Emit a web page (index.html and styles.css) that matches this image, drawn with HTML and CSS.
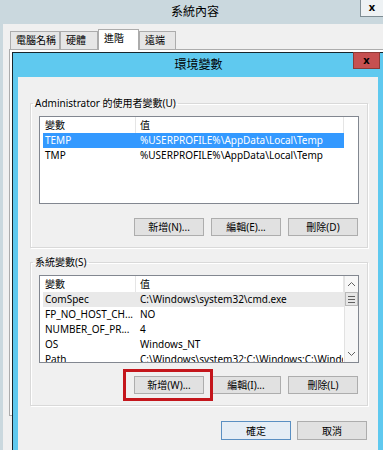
FILE: index.html
```html
<!DOCTYPE html>
<html lang="zh-Hant">
<head>
    <meta charset="UTF-8">
    <meta name="viewport" content="width=device-width, initial-scale=1.0">
    <title>系統內容 - 環境變數</title>
    <link rel="stylesheet" href="styles.css">
</head>
<body>
    <div class="window">
        <div class="titlebar">
            <span class="title">系統內容</span>
            <span class="win-close">x</span>
        </div>
        <div class="win-body">
            <div class="tabs">
                <div class="tab tab-name">電腦名稱</div>
                <div class="tab tab-hw">硬體</div>
                <div class="tab tab-adv active">進階</div>
                <div class="tab tab-remote">遠端</div>
            </div>
            <div class="tab-panel"></div>
        </div>

        <div class="dialog">
            <div class="dlg-title">
                <span class="title">環境變數</span>
                <span class="dlg-close">x</span>
            </div>
            <div class="dlg-body">
                <fieldset class="group">
                    <legend>Administrator 的使用者變數(U)</legend>
                    <div class="list">
                        <div class="rows">
                            <div class="row head"><span class="c1">變數</span><span class="c2">值</span></div>
                            <div class="row selected"><span class="c1">TEMP</span><span class="c2">%USERPROFILE%\AppData\Local\Temp</span></div>
                            <div class="row"><span class="c1">TMP</span><span class="c2">%USERPROFILE%\AppData\Local\Temp</span></div>
                        </div>
                    </div>
                    <div class="btn-row">
                        <button class="btn">新增(N)...</button>
                        <button class="btn">編輯(E)...</button>
                        <button class="btn">刪除(D)</button>
                    </div>
                </fieldset>

                <fieldset class="group group-sys">
                    <legend>系統變數(S)</legend>
                    <div class="list">
                        <div class="rows">
                            <div class="row head"><span class="c1">變數</span><span class="c2">值</span></div>
                            <div class="row hover"><span class="c1">ComSpec</span><span class="c2">C:\Windows\system32\cmd.exe</span></div>
                            <div class="row"><span class="c1">FP_NO_HOST_CH...</span><span class="c2">NO</span></div>
                            <div class="row"><span class="c1">NUMBER_OF_PR...</span><span class="c2">4</span></div>
                            <div class="row"><span class="c1">OS</span><span class="c2">Windows_NT</span></div>
                            <div class="row"><span class="c1">Path</span><span class="c2">C:\Windows\system32;C:\Windows;C:\Windows\System32\Wbem</span></div>
                        </div>
                        <div class="scrollbar">
                            <div class="arrow">
                                <svg width="9" height="6" viewBox="0 0 9 6"><polyline points="1,5 4.5,1.5 8,5"/></svg>
                            </div>
                            <div class="thumb"><i></i><i></i><i></i></div>
                            <div class="arrow arrow-down">
                                <svg width="9" height="6" viewBox="0 0 9 6"><polyline points="1,1 4.5,4.5 8,1"/></svg>
                            </div>
                        </div>
                    </div>
                    <div class="btn-row">
                        <button class="btn marked">新增(W)...</button>
                        <button class="btn">編輯(I)...</button>
                        <button class="btn">刪除(L)</button>
                    </div>
                </fieldset>

                <div class="btn-row dlg-buttons">
                    <button class="btn default">確定</button>
                    <button class="btn">取消</button>
                </div>
            </div>
        </div>
    </div>
</body>
</html>
```
FILE: styles.css
```css
html, body {
    margin: 0;
    width: 383px;
    height: 450px;
    overflow: hidden;
}

body {
    font-family: "Noto Sans", "Noto Sans CJK TC", sans-serif;
    font-size: 10px;
    color: #000;
    background-color: #cad8de;
}

.window {
    position: relative;
    height: 450px;
    background-color: #cad8de;
}

/* outer window */
.titlebar {
    display: flex;
    height: 24px;
}

.titlebar .title {
    flex: 1;
    padding-left: 30px;
    text-align: center;
    font-size: 12px;
    line-height: 24px;
}

.win-close {
    width: 22px;
    height: 16px;
    background-color: #eef2f4;
    border-left: 1px solid #7e8d94;
    border-bottom: 1px solid #7e8d94;
    text-align: center;
    font-weight: bold;
    font-size: 11px;
    line-height: 14px;
}

.win-body {
    margin-left: 3px;
    height: 426px;
    padding-top: 5px;
    box-sizing: border-box;
    background-color: #f0f0f0;
}

.tabs {
    display: flex;
    align-items: flex-end;
    height: 20px;
    padding-left: 7px;
    position: relative;
    z-index: 1;
}

.tab {
    box-sizing: border-box;
    height: 18px;
    padding-left: 5px;
    border: 1px solid #acacac;
    border-bottom: none;
    background-color: #e6e6e6;
    line-height: 17px;
}

.tab-name { width: 50px; }
.tab-hw { width: 38px; }
.tab-adv { width: 41px; }
.tab-remote { width: 37px; }

.tab.active {
    height: 21px;
    margin-bottom: -1px;
    background-color: #fff;
    line-height: 16px;
}

.tab-panel {
    margin-left: 6px;
    height: 365px;
    border: 1px solid #acacac;
    border-right: none;
    background-color: #fff;
}

/* environment variables dialog */
.dialog {
    position: absolute;
    left: 12px;
    top: 52px;
    width: 371px;
    height: 398px;
    border-left: 1px solid #17252c;
    border-top: 1px solid #17252c;
    background-color: #5fc9ef;
}

.dlg-title {
    display: flex;
    height: 24px;
}

.dlg-title .title {
    flex: 1;
    padding-left: 31px;
    text-align: center;
    font-size: 12px;
    line-height: 24px;
}

.dlg-close {
    box-sizing: border-box;
    width: 27px;
    height: 17px;
    margin-top: -1px;
    margin-right: 4px;
    background-color: #c75050;
    border: 1px solid #8d3a36;
    text-align: center;
    font-weight: bold;
    font-size: 11px;
    line-height: 13px;
}

.dlg-body {
    box-sizing: border-box;
    width: 360px;
    height: 374px;
    margin: 0 5px;
    padding-top: 19px;
    background-color: #f0f0f0;
}

.group {
    box-sizing: border-box;
    width: 338px;
    min-width: 0;
    margin: 0 0 0 12px;
    padding: 0 8px 11px;
    border: 1px solid #d9d9d9;
    box-shadow: inset 1px 1px 0 #fff, 1px 1px 0 #fff;
}

.group legend {
    margin-left: -6px;
    padding: 0 2px;
    line-height: 14px;
}

.group-sys {
    margin-top: 7px;
}

.list {
    display: flex;
    box-sizing: border-box;
    height: 88px;
    margin-top: 6px;
    padding-left: 3px;
    border: 1px solid #828790;
    background-color: #fff;
    overflow: hidden;
}

.rows {
    width: 301px;
    flex-shrink: 0;
}

.row {
    display: flex;
    height: 15px;
    line-height: 15px;
    white-space: nowrap;
}

.row.head {
    height: 16px;
    line-height: 16px;
}

.c1, .c2 {
    box-sizing: border-box;
    overflow: hidden;
    border-right: 1px solid transparent;
}

.c1 {
    width: 93px;
    padding-left: 2px;
}

.c2 {
    width: 208px;
    padding-left: 4px;
}

.head .c1, .head .c2 {
    border-right-color: #e5e5e5;
}

.row.selected {
    background-color: #3399ff;
    color: #fff;
}

.row.hover {
    background-color: #e9e9e9;
}

.scrollbar {
    display: flex;
    flex-direction: column;
    box-sizing: border-box;
    width: 14px;
    margin-left: auto;
    border-left: 1px solid #e2e2e2;
    background-color: #f7f7f7;
}

.arrow {
    display: flex;
    align-items: center;
    justify-content: center;
    height: 16px;
}

.arrow svg polyline {
    fill: none;
    stroke: #606060;
    stroke-width: 1;
}

.arrow-down {
    margin-top: auto;
}

.thumb {
    display: flex;
    flex-direction: column;
    align-items: center;
    justify-content: center;
    gap: 2px;
    box-sizing: border-box;
    height: 14px;
    border: 1px solid #b9b9b9;
    background-color: #e6e6e6;
}

.thumb i {
    display: block;
    width: 7px;
    height: 1px;
    background-color: #606060;
}

.btn-row {
    display: flex;
    justify-content: flex-end;
    gap: 7px;
    margin-top: 14px;
    margin-right: 1px;
}

.group-sys .btn-row {
    margin-top: 13px;
}

.btn {
    box-sizing: border-box;
    width: 70px;
    height: 18px;
    padding: 0;
    border: 1px solid #adadad;
    background-color: #e1e1e1;
    font-family: inherit;
    font-size: 10px;
    color: #000;
    line-height: 16px;
}

.btn.marked {
    position: relative;
}

.btn.marked::after {
    content: "";
    position: absolute;
    left: -12px;
    top: -8px;
    right: -10px;
    bottom: -8px;
    border: 3px solid #c4161c;
}

.dlg-buttons {
    gap: 6px;
    margin-top: 15px;
    margin-right: 11px;
}

.dlg-buttons .btn {
    height: 19px;
}

.btn.default {
    border-color: #5a8fc2;
    background-color: #e5edf5;
}
```
